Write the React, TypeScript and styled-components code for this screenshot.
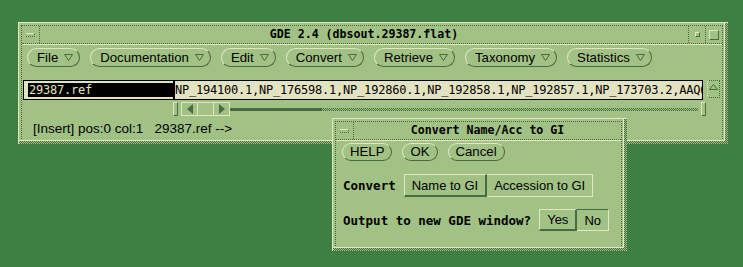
import styled, { createGlobalStyle } from 'styled-components';

const C = {
  desk: '#3e7f42',
  panel: '#a2c184',
  light: '#e2e6c3',
  dark: '#4a6a42',
  field: '#e4e3c1',
  ink: '#000000',
};

const checker = `repeating-conic-gradient(${C.dark} 0 25%, ${C.panel} 0 50%) 0 0 / 2px 2px`;
const sans = `'Liberation Sans', Arial, sans-serif`;
const mono = `'DejaVu Sans Mono', 'Liberation Mono', monospace`;

const GlobalStyle = createGlobalStyle`
  html, body {
    margin: 0;
    padding: 0;
    background: ${C.desk};
    overflow: hidden;
  }
  button {
    font: inherit;
    color: inherit;
  }
`;

const SEQ =
  'NP_194100.1,NP_176598.1,NP_192860.1,NP_192858.1,NP_192857.1,NP_173703.2,AAQ65177.1,NP_189025.1';

const MENUS = ['File', 'Documentation', 'Edit', 'Convert', 'Retrieve', 'Taxonomy', 'Statistics'];

export default function App() {
  return (
    <>
      <GlobalStyle />
      <S.Desktop>
        <S.Window $x={18} $y={22} $w={710} $h={122}>
          <S.Frame>
            <S.Inner>
              <S.TitleBar>
                <S.WinMenu>
                  <S.Dash />
                </S.WinMenu>
                <S.Title>GDE 2.4 (dbsout.29387.flat)</S.Title>
                <S.CornerBtn>
                  <S.MinBox />
                </S.CornerBtn>
                <S.CornerBtn>
                  <S.MaxBox />
                </S.CornerBtn>
              </S.TitleBar>

              <S.MenuRow>
                {MENUS.map((m) => (
                  <S.Pill key={m}>
                    {m}
                    <MenuMark />
                  </S.Pill>
                ))}
              </S.MenuRow>

              <S.FieldRow>
                <S.Field>
                  <S.Selection>29387.ref</S.Selection>
                  <S.Cursor />
                  <S.Seq>{SEQ}</S.Seq>
                </S.Field>
                <S.ScrollUp>
                  <svg width="9" height="6" viewBox="0 0 9 6">
                    <polygon points="4.5,0.5 8.5,5.5 0.5,5.5" fill={C.panel} stroke={C.dark} />
                  </svg>
                </S.ScrollUp>
              </S.FieldRow>

              <S.ScrollRow>
                <S.EndBar />
                <S.ArrowBox>
                  <S.ArrowCell>
                    <svg width="6" height="10" viewBox="0 0 6 10">
                      <polygon points="6,0 6,10 0,5" fill={C.dark} />
                    </svg>
                  </S.ArrowCell>
                  <S.ArrowCell />
                  <S.ArrowCell>
                    <svg width="6" height="10" viewBox="0 0 6 10">
                      <polygon points="0,0 6,5 0,10" fill={C.dark} />
                    </svg>
                  </S.ArrowCell>
                </S.ArrowBox>
                <S.Track $w={92} $dotted={false} />
                <S.Track $w={376} $dotted />
                <S.EndBar $gap={3} />
              </S.ScrollRow>

              <S.Status>{'[Insert] pos:0 col:1   29387.ref -->'}</S.Status>
            </S.Inner>
          </S.Frame>
        </S.Window>

        <S.Window $x={332} $y={118} $w={295} $h={133}>
          <S.Frame>
            <S.Inner>
              <S.TitleBar>
                <S.WinMenu>
                  <S.Dash />
                </S.WinMenu>
                <S.Title>Convert Name/Acc to GI</S.Title>
              </S.TitleBar>

              <S.ButtonRow>
                <S.Pill $compact>HELP</S.Pill>
                <S.Pill $compact>OK</S.Pill>
                <S.Pill $compact>Cancel</S.Pill>
              </S.ButtonRow>

              <S.OptionRow $top={13} $h={23}>
                <S.Label>Convert</S.Label>
                <S.Toggles>
                  <S.Toggle $raised>Name to GI</S.Toggle>
                  <S.Toggle>Accession to GI</S.Toggle>
                </S.Toggles>
              </S.OptionRow>

              <S.OptionRow $top={12} $h={22}>
                <S.Label>Output to new GDE window?</S.Label>
                <S.Toggles>
                  <S.Toggle $raised>Yes</S.Toggle>
                  <S.Toggle $sunk>No</S.Toggle>
                </S.Toggles>
              </S.OptionRow>
            </S.Inner>
          </S.Frame>
        </S.Window>
      </S.Desktop>
    </>
  );
}

function MenuMark() {
  return (
    <svg width="9" height="7" viewBox="0 0 9 7">
      <polygon points="0.5,0.5 8.5,0.5 4.5,6.5" fill="none" stroke={C.dark} />
    </svg>
  );
}

const S = {
  Desktop: styled.div`
    position: relative;
    width: 743px;
    height: 267px;
    background: ${C.desk};
    font-family: ${sans};
    color: ${C.ink};
  `,
  Window: styled.div<{ $x: number; $y: number; $w: number; $h: number }>`
    position: absolute;
    left: ${(p) => p.$x}px;
    top: ${(p) => p.$y}px;
    width: ${(p) => p.$w}px;
    height: ${(p) => p.$h}px;
    box-sizing: border-box;
    display: flex;
    border-top: 1px solid ${C.light};
    border-left: 1px solid ${C.light};
    padding: 0 3px 3px 0;
    background: ${checker};
  `,
  Frame: styled.div`
    flex: 1;
    display: flex;
    min-width: 0;
    background: ${C.panel};
    border-right: 1px solid ${C.light};
    border-bottom: 1px solid ${C.light};
    padding: 2px 1px 1px 2px;
  `,
  Inner: styled.div`
    flex: 1;
    display: flex;
    flex-direction: column;
    min-width: 0;
    overflow: hidden;
    border-top: 1px dotted ${C.dark};
    border-left: 1px dotted ${C.dark};
    border-right: 1px dotted ${C.dark};
  `,
  TitleBar: styled.div`
    display: flex;
    flex: none;
    height: 17px;
    border-bottom: 1px dotted ${C.dark};
    box-shadow: 0 1px 0 ${C.light};
  `,
  WinMenu: styled.div`
    width: 17px;
    display: flex;
    align-items: center;
    justify-content: center;
    border-right: 1px dotted ${C.dark};
  `,
  Dash: styled.span`
    width: 8px;
    height: 2px;
    border-top: 1px solid ${C.light};
    border-bottom: 1px dotted ${C.dark};
    border-right: 1px dotted ${C.dark};
  `,
  Title: styled.div`
    flex: 1;
    text-align: center;
    font-family: ${mono};
    font-weight: bold;
    font-size: 11.6px;
    line-height: 17px;
  `,
  CornerBtn: styled.div`
    width: 16px;
    display: flex;
    align-items: center;
    justify-content: center;
    border-left: 1px dotted ${C.dark};
  `,
  MinBox: styled.span`
    width: 3px;
    height: 3px;
    border: 1px solid ${C.dark};
    border-top-color: ${C.light};
    border-left-color: ${C.light};
  `,
  MaxBox: styled.span`
    width: 8px;
    height: 8px;
    border: 1px solid ${C.dark};
    border-top-color: ${C.light};
    border-left-color: ${C.light};
  `,
  MenuRow: styled.div`
    display: flex;
    gap: 10px;
    padding: 4px 0 0 5px;
  `,
  ButtonRow: styled.div`
    display: flex;
    gap: 10px;
    padding: 3px 0 0 6px;
  `,
  Pill: styled.button<{ $compact?: boolean }>`
    display: inline-flex;
    align-items: center;
    gap: 6px;
    height: ${(p) => (p.$compact ? 18 : 19)}px;
    padding: ${(p) => (p.$compact ? '0 7px' : '0 6px 0 9px')};
    border: 1px solid;
    border-color: ${C.light} ${C.dark} ${C.dark} ${C.light};
    border-radius: 10px;
    background: ${C.panel};
    font-family: ${sans};
    font-size: 13.2px;
    line-height: 1;
    white-space: nowrap;
  `,
  FieldRow: styled.div`
    display: flex;
    align-items: flex-start;
    gap: 4px;
    padding: 13px 0 0 1px;
  `,
  Field: styled.div`
    width: 680px;
    height: 20px;
    box-sizing: border-box;
    flex: none;
    display: flex;
    align-items: center;
    padding-left: 4px;
    overflow: hidden;
    white-space: nowrap;
    border: 1px solid ${C.ink};
    background: ${C.field};
    font-family: ${mono};
    font-size: 12px;
    letter-spacing: -0.22px;
  `,
  Selection: styled.span`
    flex: none;
    width: 145px;
    height: 14px;
    line-height: 14px;
    padding-left: 1px;
    box-sizing: border-box;
    background: ${C.ink};
    color: ${C.field};
  `,
  Cursor: styled.span`
    flex: none;
    width: 2px;
    align-self: stretch;
    background: ${C.ink};
  `,
  Seq: styled.span`
    flex: none;
    line-height: 14px;
  `,
  ScrollUp: styled.div`
    width: 11px;
    height: 13px;
    padding-top: 3px;
    border: 1px dotted ${C.dark};
    border-left-color: ${C.light};
    display: flex;
    justify-content: center;
  `,
  ScrollRow: styled.div`
    display: flex;
    align-items: center;
    height: 14px;
    margin-top: 2px;
    padding-left: 151px;
  `,
  EndBar: styled.span<{ $gap?: number }>`
    flex: none;
    width: 5px;
    height: 14px;
    margin-left: ${(p) => p.$gap ?? 0}px;
    box-sizing: border-box;
    border: 1px solid ${C.light};
    border-right-color: ${C.dark};
    border-bottom-color: ${C.dark};
  `,
  ArrowBox: styled.div`
    display: flex;
    margin-left: 3px;
    height: 14px;
    box-sizing: border-box;
    border: 1px solid ${C.light};
  `,
  ArrowCell: styled.div`
    width: 15px;
    display: flex;
    align-items: center;
    justify-content: center;
    & + & {
      border-left: 1px solid ${C.light};
    }
  `,
  Track: styled.span<{ $w: number; $dotted: boolean }>`
    flex: none;
    width: ${(p) => p.$w}px;
    height: 3px;
    background: ${(p) => (p.$dotted ? checker : C.dark)};
  `,
  Status: styled.div`
    height: 18px;
    margin-top: 4px;
    padding-left: 11px;
    font-size: 13.5px;
    line-height: 18px;
    white-space: pre;
  `,
  OptionRow: styled.div<{ $top: number; $h: number }>`
    display: flex;
    align-items: center;
    gap: 8px;
    height: ${(p) => p.$h}px;
    margin-top: ${(p) => p.$top}px;
    padding-left: 7px;
  `,
  Label: styled.span`
    font-family: ${mono};
    font-weight: bold;
    font-size: 12.5px;
    white-space: nowrap;
  `,
  Toggles: styled.div`
    display: flex;
    align-self: stretch;
  `,
  Toggle: styled.button<{ $raised?: boolean; $sunk?: boolean }>`
    display: flex;
    align-items: center;
    padding: 0 7px;
    background: ${C.panel};
    font-family: ${sans};
    font-size: 13px;
    white-space: nowrap;
    border-style: solid;
    border-color: ${(p) =>
      p.$raised
        ? `${C.light} ${C.dark} ${C.dark} ${C.light}`
        : `${p.$sunk ? C.dark : C.light} ${C.light} ${C.light} transparent`};
    border-width: ${(p) => (p.$raised ? '1px 2px 2px 1px' : '1px 1px 1px 0')};
  `,
};
